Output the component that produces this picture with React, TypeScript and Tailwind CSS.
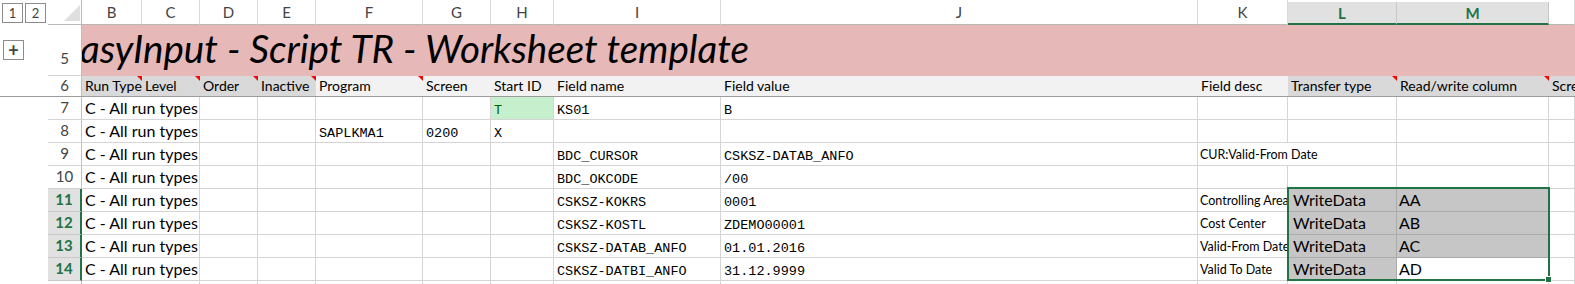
import React from 'react';

const COLS =
  'grid grid-cols-[48px_34px_60px_58px_58px_58px_107px_68px_63px_167px_477px_90px_109px_152px_1fr]';
const SANS = "font-['Lato',sans-serif]";
const MONO = "font-['Liberation_Mono',monospace]";

interface DataRow {
  n: number;
  f?: string;
  g?: string;
  h?: string;
  i?: string;
  j?: string;
  k?: string;
  l?: string;
  m?: string;
}

const rows: DataRow[] = [
  { n: 7, h: 'T', i: 'KS01', j: 'B' },
  { n: 8, f: 'SAPLKMA1', g: '0200', h: 'X' },
  { n: 9, i: 'BDC_CURSOR', j: 'CSKSZ-DATAB_ANFO', k: 'CUR:Valid-From Date' },
  { n: 10, i: 'BDC_OKCODE', j: '/00' },
  { n: 11, i: 'CSKSZ-KOKRS', j: '0001', k: 'Controlling Area', l: 'WriteData', m: 'AA' },
  { n: 12, i: 'CSKSZ-KOSTL', j: 'ZDEMO00001', k: 'Cost Center', l: 'WriteData', m: 'AB' },
  { n: 13, i: 'CSKSZ-DATAB_ANFO', j: '01.01.2016', k: 'Valid-From Date', l: 'WriteData', m: 'AC' },
  { n: 14, i: 'CSKSZ-DATBI_ANFO', j: '31.12.9999', k: 'Valid To Date', l: 'WriteData', m: 'AD' },
];

const letters = ['B', 'C', 'D', 'E', 'F', 'G', 'H', 'I', 'J', 'K', 'L', 'M', ''];

const headers: { label: string; bg: string; note?: boolean }[] = [
  { label: 'Run Type', bg: 'bg-[#d9d9d9]', note: true },
  { label: 'Level', bg: 'bg-[#d9d9d9]', note: true },
  { label: 'Order', bg: 'bg-[#d9d9d9]', note: true },
  { label: 'Inactive', bg: 'bg-[#d9d9d9]', note: true },
  { label: 'Program', bg: 'bg-[#f2f2f2]', note: true },
  { label: 'Screen', bg: 'bg-[#f2f2f2]' },
  { label: 'Start ID', bg: 'bg-[#f2f2f2]' },
  { label: 'Field name', bg: 'bg-[#f2f2f2]' },
  { label: 'Field value', bg: 'bg-[#f2f2f2]' },
  { label: 'Field desc', bg: 'bg-[#f2f2f2]' },
  { label: 'Transfer type', bg: 'bg-[#d9d9d9]', note: true },
  { label: 'Read/write column', bg: 'bg-[#d9d9d9]', note: true },
  { label: 'Scre', bg: 'bg-[#d9d9d9]' },
];

const OutlineBtn: React.FC<{ children: React.ReactNode }> = ({ children }) => (
  <div
    className={`flex h-[20px] w-[21px] items-center justify-center border border-[#8c8c8c] text-[13px] leading-none text-[#444] ${SANS}`}
  >
    {children}
  </div>
);

const RowNum: React.FC<{ n: number; sel?: boolean; className?: string }> = ({ n, sel, className = '' }) => (
  <div
    className={`flex items-end justify-center border-b text-[15px] leading-none ${SANS} ${
      sel
        ? 'border-r-2 border-b-[#c8c8c8] border-r-[#217346] bg-[#e1e1e1] font-bold text-[#217346]'
        : 'border-r border-b-[#d4d4d4] border-r-[#bfbfbf] text-[#444]'
    } ${className}`}
  >
    {n}
  </div>
);

interface CellProps {
  children?: React.ReactNode;
  className?: string;
  spill?: boolean;
  sel?: boolean;
}

const Cell: React.FC<CellProps> = ({ children, className = '', spill, sel }) => (
  <div
    className={`flex items-end whitespace-nowrap border-b ${
      sel ? 'border-r border-[#ababab] bg-[#c6c6c6]' : 'border-[#d4d4d4]'
    } ${spill ? 'relative z-10 overflow-visible' : `overflow-hidden ${sel ? '' : 'border-r'}`} ${className}`}
  >
    {children}
  </div>
);

export default function App() {
  return (
    <div className="relative h-[284px] w-[1575px] overflow-hidden bg-white text-black">
      {/* column letters */}
      <div className={`${COLS} h-[25px]`}>
        <div className="flex items-start gap-[2px] pl-[2px] pt-[3px]">
          <OutlineBtn>1</OutlineBtn>
          <OutlineBtn>2</OutlineBtn>
        </div>
        <div className="flex items-end justify-end border-b border-r border-[#b8b8b8] pb-[3px] pr-[1px]">
          <svg width="16" height="16" viewBox="0 0 16 16">
            <polygon points="16,0 16,16 0,16" fill="#dfdfdf" />
          </svg>
        </div>
        {letters.map((c, idx) => {
          const sel = c === 'L' || c === 'M';
          return (
            <div
              key={idx}
              className={`flex items-center justify-center pt-[1px] text-[15px] leading-none ${SANS} ${
                sel
                  ? 'mt-[2px] border-b-2 border-r border-b-[#217346] border-r-[#c6c6c6] bg-[#e1e1e1] font-bold text-[#217346]'
                  : 'border-b border-r border-b-[#b8b8b8] border-r-[#dadada] text-[#444]'
              }`}
            >
              {c}
            </div>
          );
        })}
      </div>

      {/* row 5 title */}
      <div className={`${COLS} h-[51px]`}>
        <div className="pl-[3px] pt-[15px]">
          <OutlineBtn>
            <span className="text-[18px] font-bold">+</span>
          </OutlineBtn>
        </div>
        <RowNum n={5} className="pb-[9px]" />
        <div className="col-span-13 flex items-end overflow-hidden whitespace-nowrap bg-[#e6b8b7]">
          <span className={`-ml-[22px] pb-[8px] text-[38.6px] italic leading-none ${SANS}`}>
            EasyInput - Script TR - Worksheet template
          </span>
        </div>
      </div>

      {/* row 6 headers */}
      <div className={`${COLS} h-[21px] border-b border-[#9c9c9c]`}>
        <div />
        <div className={`flex items-end justify-center border-r border-[#bfbfbf] pb-[3px] text-[15px] leading-none text-[#444] ${SANS}`}>
          6
        </div>
        {headers.map((h) => (
          <div
            key={h.label}
            className={`relative flex items-end overflow-hidden whitespace-nowrap pb-[3px] pl-[3px] text-[14px] leading-none ${SANS} ${h.bg}`}
          >
            {h.label}
            {h.note && (
              <span className="absolute right-0 top-0 h-[5px] w-[5px] bg-[#ff0000] [clip-path:polygon(0_0,100%_0,100%_100%)]" />
            )}
          </div>
        ))}
      </div>

      {/* data rows */}
      {rows.map((r) => {
        const inSel = r.n >= 11;
        return (
          <div key={r.n} className={`${COLS} h-[23px]`}>
            <div />
            <RowNum n={r.n} sel={inSel} className="pb-[4px]" />
            <Cell spill className={`pb-[3px] pl-[3px] text-[16px] leading-none ${SANS}`}>
              C - All run types
            </Cell>
            <Cell />
            <Cell />
            <Cell />
            <Cell className={`pb-[2px] pl-[3px] text-[13.5px] leading-none ${MONO}`}>{r.f}</Cell>
            <Cell className={`pb-[2px] pl-[3px] text-[13.5px] leading-none ${MONO}`}>{r.g}</Cell>
            <Cell
              className={`pb-[2px] pl-[3px] text-[13.5px] leading-none ${MONO} ${
                r.h === 'T' ? 'bg-[#c6efce] text-[#006100]' : ''
              }`}
            >
              {r.h}
            </Cell>
            <Cell className={`pb-[2px] pl-[3px] text-[13.5px] leading-none ${MONO}`}>{r.i}</Cell>
            <Cell className={`pb-[2px] pl-[3px] text-[13.5px] leading-none ${MONO}`}>{r.j}</Cell>
            <Cell spill={r.n === 9} className={`pb-[4px] pl-[2px] text-[12.5px] leading-none ${SANS}`}>
              {r.k}
            </Cell>
            <Cell sel={inSel} className={`pb-[3px] pl-[5px] text-[16px] leading-none ${SANS}`}>
              {r.l}
            </Cell>
            <Cell
              sel={inSel && r.n < 14}
              className={`pb-[3px] pl-[2px] text-[16px] leading-none ${SANS}`}
            >
              {r.m}
            </Cell>
            <Cell />
          </div>
        );
      })}

      {/* partial row 15 */}
      <div className={`${COLS} h-[3px]`}>
        <div />
        <div className="border-r border-[#bfbfbf]" />
        {letters.map((c, idx) => (
          <div key={idx} className={idx === 0 ? '' : 'border-r border-[#d4d4d4]'} />
        ))}
      </div>

      {/* selection overlay */}
      <div className="pointer-events-none absolute left-[1287px] top-[187px] h-[94px] w-[263px] border-2 border-[#217346]" />
      <div className="pointer-events-none absolute left-[1545px] top-[276px] h-[7px] w-[7px] border border-white bg-[#217346]" />
    </div>
  );
}
